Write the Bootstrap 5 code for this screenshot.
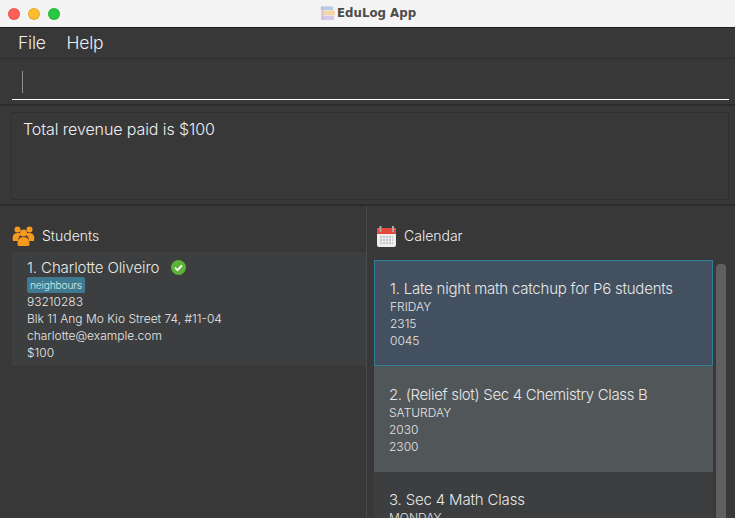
<!DOCTYPE html>
<html lang="en">
<head>
<meta charset="utf-8">
<title>EduLog App</title>
<link href="https://cdn.jsdelivr.net/npm/bootstrap@5.3.0/dist/css/bootstrap.min.css" rel="stylesheet">
<style>
html,body{height:518px;overflow:hidden}
body{background:#383838;font-family:Inter,"Liberation Sans",sans-serif;color:#e4e4e4}
.app-win{width:735px;height:518px;overflow:hidden}
.title-bar{height:28px;background:#f5f4f5;border-bottom:1px solid #1d1d1d;padding-left:8px;position:relative;flex:none}
.tl{width:12px;height:12px;border-radius:50%;border:.5px solid rgba(0,0,0,.1)}
.tl-r{background:#fe5f57}.tl-y{background:#febc2e}.tl-g{background:#28c840}
.title-mid{position:absolute;left:320px;top:3px;height:19px;gap:2px;font:700 11.8px "DejaVu Sans",sans-serif;color:#4c4c4c}
.menu-bar{height:31px;flex:none;border-bottom:1px solid #2d2d2d;padding-left:18px;gap:21px;font-size:17.5px;font-weight:300;color:#eee;letter-spacing:-.25px}
.cmd-zone{height:47px;flex:none;padding:0 6px 0 12px;border-bottom:2px solid #2c2c2c}
.cmd-in{height:41px;border-bottom:1.5px solid #fff;padding:12px 0 0 10px}
.caret-bar{width:1px;height:22px;background:#8f8f8f}
.res-zone{height:100px;flex:none;padding:6px 6px 4px 11px;border-bottom:2px solid #2c2c2c}
.res-box{height:88px;border:1px solid #2f2f2f;padding:6px 11px;font-size:16px;font-weight:300;line-height:20px;color:#f0f0f0;letter-spacing:-.1px}
.panes{flex:1;min-height:0}
.pane-l{width:367px;flex:none;border-right:1px solid #4a4a4a;padding:13px 0 0 12px}
.pane-r{flex:1;min-width:0;padding:13px 0 0 7px}
.pane-h{height:33px;gap:7px;font-size:14px;font-weight:300;color:#f0f0f0}
.pane-r .pane-h{gap:8px;padding-left:3px}
.cal-ico{margin-top:2px}
.stu-card{height:114px;background:#3c3e3f;padding:6px 0 0 15px;font-size:12px;font-weight:300;line-height:17px;color:#e8e8e8}
.card-title{font-size:15px;line-height:19px;font-weight:300;color:#e8e8e8;letter-spacing:-.1px}
.tag-row{height:16px}
.tag-chip{background:#3e7b91;color:#dfeaee;font-size:10.2px;line-height:16px;height:16px;padding:0 3px;border-radius:2px;letter-spacing:-.17px}
.cal-scroll{gap:3px;margin-top:8px}
.cal-list{width:339px;flex:none}
.cal-item{height:106px;padding:19px 15px 0;font-size:12px;font-weight:300;line-height:17px;color:#e4e4e4}
.cal-item .card-title{margin-bottom:0}
.cal-sel{background:#43505f;border:1px solid #2f7f96;padding:18px 14px 0 15px}
.cal-sel .card-title{letter-spacing:-.22px}
.cal-alt{background:#515658}
.cal-alt .card-title{letter-spacing:-.34px}
.cal-dark{background:#3c3e3f;padding-top:18px}
.cal-dark .card-title{letter-spacing:-.17px}
.sb-track{width:10px;margin-top:4px;background:#5f5f5f;border-radius:4px 4px 0 0;height:260px}
</style>
</head>
<body>
<div class="app-win d-flex flex-column">
  <div class="title-bar d-flex align-items-center gap-2">
    <span class="tl tl-r"></span><span class="tl tl-y"></span><span class="tl tl-g"></span>
    <div class="title-mid d-flex align-items-center">
      <svg width="15" height="16" viewBox="0 0 16 16"><rect x="1" y="1" width="13" height="4" fill="#b9cbe6"/><rect x="2" y="5.5" width="14" height="5" fill="#f3d7a8"/><rect x="2" y="11" width="13" height="4.5" fill="#d6c9ea"/><rect x="1" y="1" width="3" height="14.5" fill="#c3b9de" opacity=".55"/></svg>
      <span>EduLog App</span>
    </div>
  </div>
  <div class="menu-bar d-flex align-items-center"><span>File</span><span>Help</span></div>
  <div class="cmd-zone"><div class="cmd-in"><div class="caret-bar"></div></div></div>
  <div class="res-zone"><div class="res-box">Total revenue paid is $100</div></div>
  <div class="panes d-flex">
    <div class="pane-l">
      <div class="pane-h d-flex align-items-center">
        <svg width="23" height="20" viewBox="0 0 23 20" fill="#f7991e"><circle cx="5.5" cy="3.500" r="3"/><circle cx="17.5" cy="3.500" r="3"/><path d="M1 15c-1-5 .5-8 4.500-8s3.500 1.500 3.500 1.500c-2 2-3 4-3 6.500z"/><path d="M22 15c1-5-.5-8-4.500-8s-3.500 1.500-3.500 1.500c2 2 3 4 3 6.500z"/><circle cx="11.500" cy="7" r="3.600"/><path d="M7 20c-1 0-1.500-1-1.500-2 0-4 1.500-7 6-7s6 3 6 7c0 1-.5 2-1.500 2z"/></svg>
        <span>Students</span>
      </div>
      <div class="stu-card">
        <div class="card-title d-flex align-items-center gap-2"><span>1. Charlotte Oliveiro</span>
          <svg class="ms-1" width="15" height="15" viewBox="0 0 15 15"><circle cx="7.500" cy="7.500" r="7.500" fill="#5cb338"/><path d="M4 7.700l2.500 2.400L11 5.300" fill="none" stroke="#fff" stroke-width="1.800"/></svg>
        </div>
        <div class="tag-row d-flex align-items-start"><span class="tag-chip">neighbours</span></div>
        <div>93210283</div>
        <div>Blk 11 Ang Mo Kio Street 74, #11-04</div>
        <div>charlotte@example.com</div>
        <div>$100</div>
      </div>
    </div>
    <div class="pane-r">
      <div class="pane-h d-flex align-items-center">
        <svg class="cal-ico" width="19" height="21" viewBox="0 0 19 21"><rect x="0" y="2" width="19" height="19" rx="2" fill="#eceeef"/><path d="M0 8V4a2 2 0 0 1 2-2h15a2 2 0 0 1 2 2v4z" fill="#e8483c"/><rect x="2.500" y="0" width="2" height="6" fill="#a8a8a8"/><rect x="15" y="0" width="2" height="6" fill="#a8a8a8"/><path d="M3 11h13M3 14h13M3 17h13" fill="none" stroke="#c4c7c9" stroke-width="2" stroke-dasharray="2 1"/></svg>
        <span>Calendar</span>
      </div>
      <div class="cal-scroll d-flex">
        <div class="cal-list">
          <div class="cal-item cal-sel"><div class="card-title">1. Late night math catchup for P6 students</div><div>FRIDAY</div><div>2315</div><div>0045</div></div>
          <div class="cal-item cal-alt"><div class="card-title">2. (Relief slot) Sec 4 Chemistry Class B</div><div>SATURDAY</div><div>2030</div><div>2300</div></div>
          <div class="cal-item cal-dark"><div class="card-title">3. Sec 4 Math Class</div><div>MONDAY</div></div>
        </div>
        <div class="sb-track"></div>
      </div>
    </div>
  </div>
</div>
</body>
</html>
